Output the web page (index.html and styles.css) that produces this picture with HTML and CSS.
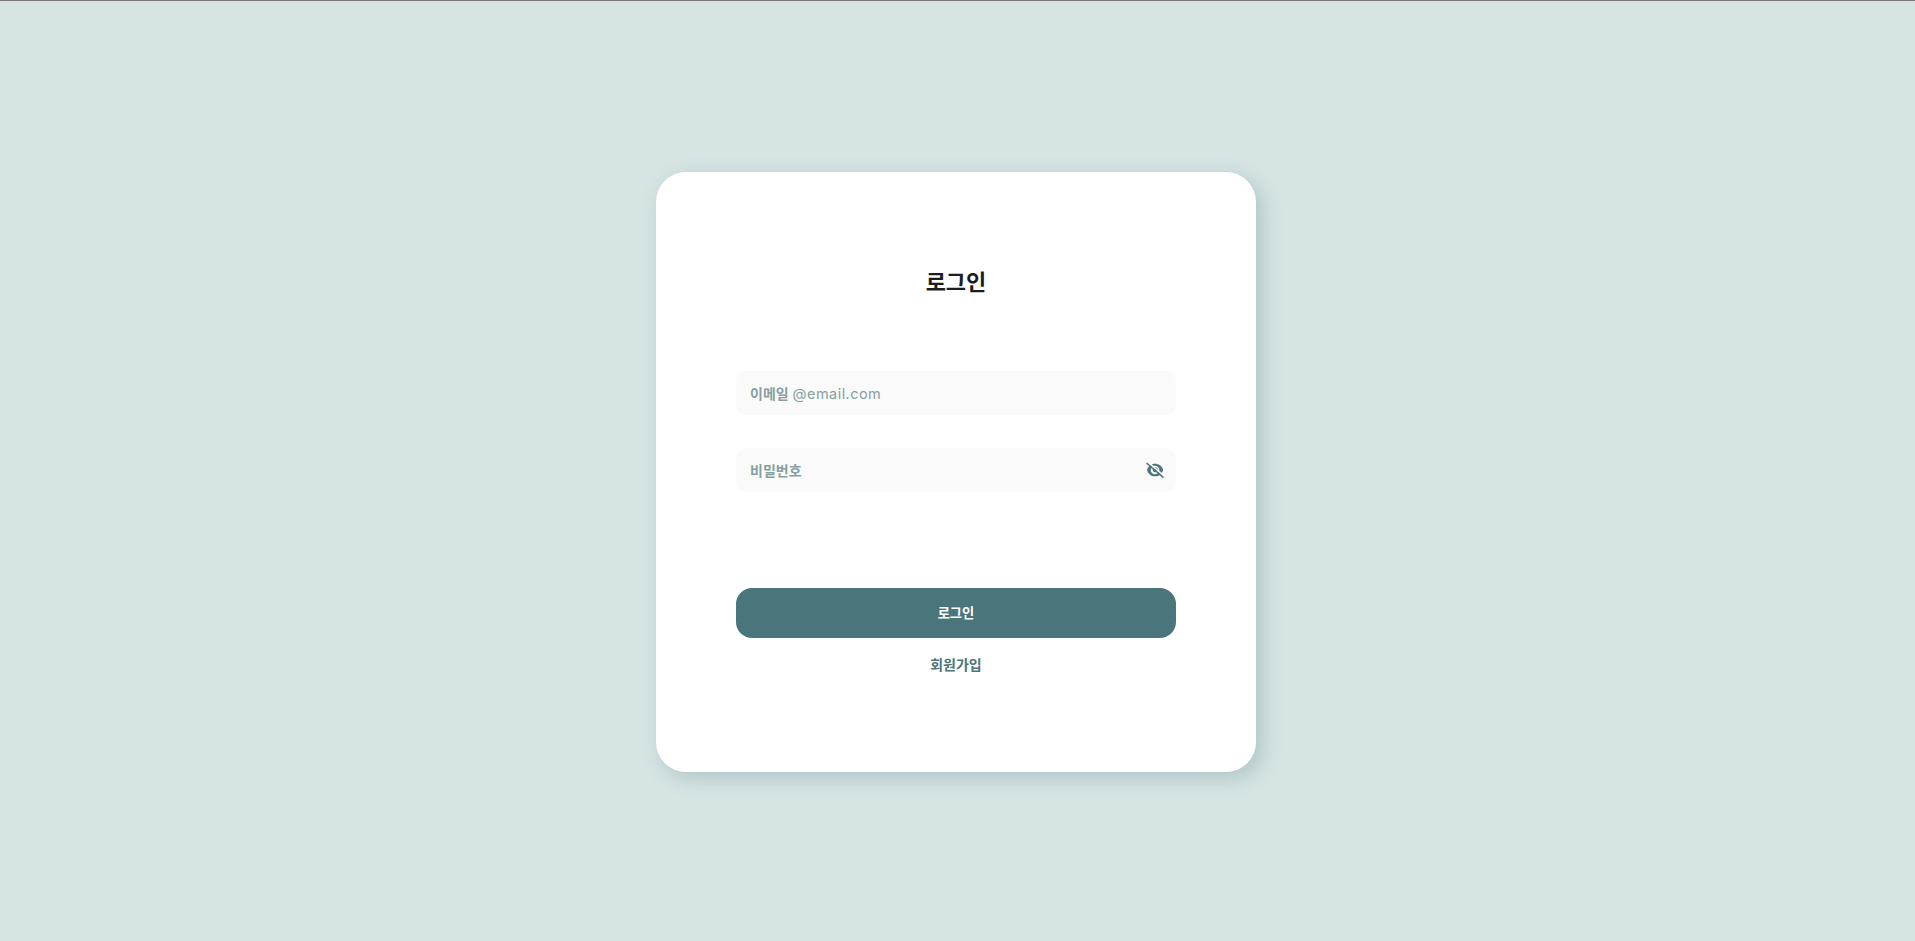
FILE: index.html
```
<!DOCTYPE html>
<html lang="ko">
<head>
  <meta charset="UTF-8">
  <title>로그인</title>
  <link rel="stylesheet" href="styles.css">
</head>
<body>
  <div class="container">
    <form class="login-card">
      <h1 class="title">로그인</h1>
      <label class="field">
        <span>이메일 <span class="latin">@email.com</span></span>
      </label>
      <label class="field">
        <span>비밀번호</span>
        <svg class="eye" viewBox="0 0 20 20">
          <path d="M2 10C3.300 5.900 6.200 3.700 10 3.700s6.900 2.200 8.200 6.300C16.900 14.100 13.800 16.300 10 16.300S3.300 14.100 2 10z" fill="#4a757a"/>
          <circle cx="10" cy="10" r="4.300" fill="#fafafa"/>
          <circle cx="10.300" cy="9.800" r="2.500" fill="#4a757a"/>
          <path d="M2.700 1.900L19.300 16.200" stroke="#fafafa" stroke-width="1.600"/>
          <path d="M1.500 3L18.500 17.600" stroke="#4a757a" stroke-width="1.500"/>
        </svg>
      </label>
      <button class="login-button" type="button">로그인</button>
      <a class="signup">회원가입</a>
    </form>
  </div>
</body>
</html>
```

FILE: styles.css
```
* {
  box-sizing: border-box;
}

body {
  margin: 0;
  font-family: "Noto Sans CJK KR", sans-serif;
  background-color: #d6e4e4;
}

.container {
  display: flex;
  justify-content: center;
  height: 100vh;
  padding: 171px 3px 0 0;
  border-top: 1px solid #777a80;
}

.login-card {
  display: flex;
  flex-direction: column;
  width: 600px;
  height: 600px;
  padding: 92px 80px 0;
  border-radius: 30px;
  background-color: #fff;
  box-shadow: 6px 6px 20px rgba(74, 117, 122, 0.28);
}

.title {
  margin: 0 0 75px;
  font-size: 22px;
  line-height: 32px;
  font-weight: 700;
  text-align: center;
  color: #1c1c1c;
}

.field {
  display: flex;
  align-items: center;
  justify-content: space-between;
  height: 44px;
  margin-bottom: 33px;
  padding: 0 11px 1px 14px;
  border-radius: 10px;
  background-color: #fafafa;
  font-size: 14px;
  font-weight: 600;
  color: #86a09f;
}

.latin {
  font-family: Inter, sans-serif;
  font-size: 14.5px;
  font-weight: 400;
  letter-spacing: 0.45px;
}

.eye {
  width: 20px;
  height: 20px;
}

.login-button {
  height: 50px;
  margin-top: 63px;
  padding-bottom: 3px;
  border: none;
  border-radius: 16px;
  background-color: #4a757a;
  font-family: inherit;
  font-size: 13.3px;
  font-weight: 700;
  color: #fff;
  cursor: pointer;
}

.signup {
  margin-top: 16px;
  font-size: 14px;
  line-height: 20px;
  font-weight: 700;
  text-align: center;
  color: #4a757a;
  cursor: pointer;
}
```
